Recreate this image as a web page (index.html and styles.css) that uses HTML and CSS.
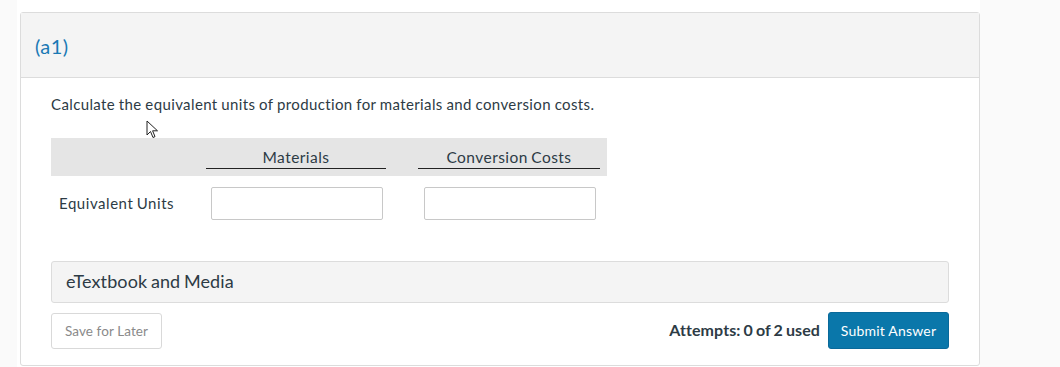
FILE: index.html
```html
<!DOCTYPE html>
<html>
<head>
<meta charset="utf-8">
<link rel="stylesheet" href="styles.css">
</head>
<body>
<div class="page">
  <div class="card">
    <div class="card-head"><span class="part">(a1)</span></div>
    <div class="card-body">
      <p class="question">Calculate the equivalent units of production for materials and conversion costs.</p>
      <div class="grid">
        <div class="grid-head">
          <div class="spacer"></div>
          <div class="col-title">Materials</div>
          <div class="col-title">Conversion Costs</div>
        </div>
        <div class="grid-row">
          <div class="row-label">Equivalent Units</div>
          <div class="cell"><input class="field" type="text"></div>
          <div class="cell"><input class="field" type="text"></div>
        </div>
      </div>
      <div class="media">eTextbook and Media</div>
      <div class="actions">
        <button class="btn-save">Save for Later</button>
        <div class="right">
          <span class="attempts">Attempts: 0 of 2 used</span>
          <button class="btn-submit">Submit Answer</button>
        </div>
      </div>
    </div>
  </div>
</div>
<svg class="cursor" width="14" height="20" viewBox="0 0 14 20"><path d="M1 1 L1 15 L4.5 11.5 L7 17.5 L9 16.6 L6.6 10.8 L11.5 10.8 Z" fill="#fff" stroke="#222" stroke-width="1"/></svg>
</body>
</html>
```
FILE: styles.css
```css
html, body { margin: 0; padding: 0; }
body {
  background: #fafafa;
  font-family: Lato, "Liberation Sans", sans-serif;
  color: #2d3b45;
  width: 1060px;
  height: 367px;
  overflow: hidden;
  position: relative;
}
.page {
  margin-left: 17px;
  width: 963px;
  height: 367px;
  background: #fff;
  padding: 12px 0 0 3px;
  box-sizing: border-box;
}
.card {
  width: 960px;
  height: 354px;
  box-sizing: border-box;
  border: 1px solid #dcdcdc;
  border-radius: 3px;
  background: #fff;
}
.card-head {
  height: 65px;
  background: #f4f4f4;
  border-bottom: 1px solid #dcdcdc;
  box-sizing: border-box;
  display: flex;
  align-items: center;
  padding-left: 14px;
}
.part {
  color: #1a79b4;
  font-size: 20px;
  margin-top: 2px;
  letter-spacing: 0.4px;
}
.card-body {
  padding: 0 30px 0 30px;
}
.question {
  margin: 16px 0 0 0;
  font-size: 15px;
  line-height: 20px;
  letter-spacing: 0.38px;
  word-spacing: -0.5px;
}
.grid {
  margin-top: 24px;
  width: 556px;
}
.grid-head {
  display: flex;
  background: #e5e5e5;
  height: 38px;
  padding-top: 9px;
  box-sizing: border-box;
}
.spacer { width: 155px; flex-shrink: 0; }
.col-title {
  width: 180px;
  flex-shrink: 0;
  margin-right: 32px;
  text-align: center;
  font-size: 15.5px;
  line-height: 20px;
  letter-spacing: 0.45px;
  word-spacing: -1px;
  border-bottom: 1px solid #222;
  height: 21px;
}
.col-title:last-child { width: 182px; margin-right: 0; }
.grid-row {
  display: flex;
  align-items: center;
  margin-top: 11px;
  height: 33px;
}
.row-label {
  width: 160px;
  flex-shrink: 0;
  padding-left: 8px;
  box-sizing: border-box;
  font-size: 15px;
  letter-spacing: 0.55px;
  word-spacing: -1px;
  margin-top: -2px;
}
.cell { width: 172px; margin-right: 41px; flex-shrink: 0; }
.field {
  width: 172px;
  height: 33px;
  box-sizing: border-box;
  border: 1px solid #c8c8c8;
  border-radius: 2px;
  background: #fff;
  margin: 0;
  display: block;
}
.media {
  margin-top: 41px;
  width: 898px;
  height: 42px;
  box-sizing: border-box;
  background: #f4f4f4;
  border: 1px solid #dcdcdc;
  border-radius: 3px;
  font-size: 18px;
  line-height: 38px;
  padding-left: 14px;
  letter-spacing: 0.1px;
  word-spacing: -1px;
}
.actions {
  margin-top: 9px;
  width: 898px;
  display: flex;
  justify-content: space-between;
  align-items: center;
}
.btn-save {
  width: 111px;
  height: 36px;
  box-sizing: border-box;
  background: #fff;
  border: 1px solid #d9d9d9;
  border-radius: 3px;
  font-family: Lato, "Liberation Sans", sans-serif;
  font-size: 13.5px;
  letter-spacing: 0.1px;
  color: #8a8a8a;
  margin-top: 1px;
  padding: 0;
}
.right { display: flex; align-items: center; }
.attempts {
  font-weight: bold;
  font-size: 16px;
  letter-spacing: 0.1px;
  word-spacing: -1px;
  margin-right: 8px;
  margin-top: -2px;
}
.btn-submit {
  width: 121px;
  height: 37px;
  box-sizing: border-box;
  background: #0a77aa;
  border: 1px solid #09699a;
  border-radius: 3px;
  color: #fff;
  font-family: Lato, "Liberation Sans", sans-serif;
  font-size: 14px;
  letter-spacing: 0.2px;
  padding: 0;
}
.cursor {
  position: absolute;
  left: 146px;
  top: 120px;
}
```
